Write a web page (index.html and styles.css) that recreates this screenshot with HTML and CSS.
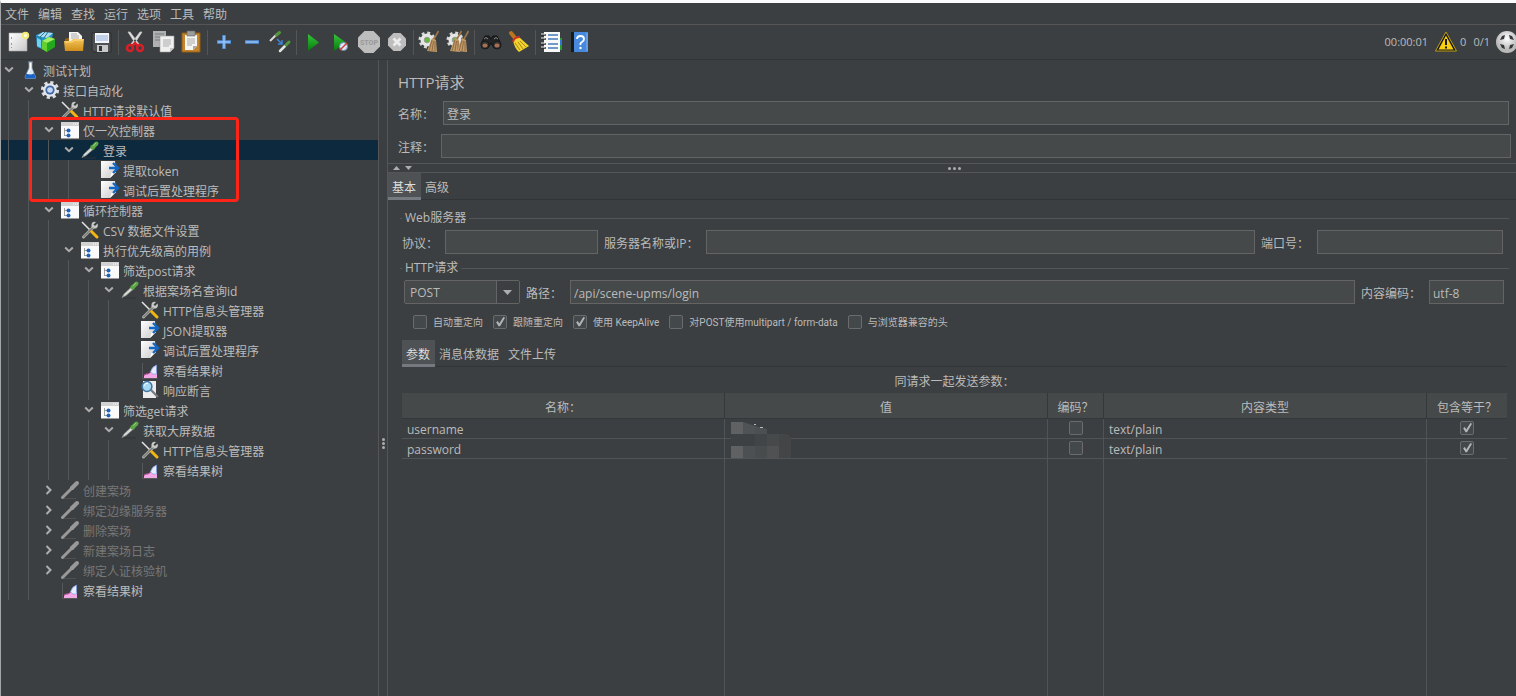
FILE: index.html
```html
<!DOCTYPE html>
<html lang="zh-CN">
<head>
<meta charset="utf-8">
<title>HTTP请求</title>
<link rel="stylesheet" href="styles.css">
</head>
<body>
<svg class="sprite" aria-hidden="true">
  <defs>
    <linearGradient id="g-paper" x1="0" y1="0" x2="1" y2="1"><stop offset="0" stop-color="#fff"/><stop offset="1" stop-color="#c9c9c9"/></linearGradient>
    <linearGradient id="g-green" x1="0" y1="0" x2="0" y2="1"><stop offset="0" stop-color="#36c43a"/><stop offset="1" stop-color="#067a0c"/></linearGradient>
    <linearGradient id="g-gold" x1="0" y1="0" x2="0" y2="1"><stop offset="0" stop-color="#f3c65a"/><stop offset="1" stop-color="#cf8d18"/></linearGradient>
    <radialGradient id="g-ball" cx=".5" cy=".35"><stop offset="0" stop-color="#fff"/><stop offset="1" stop-color="#b9b9b9"/></radialGradient>
  </defs>
  <symbol id="open" viewBox="0 0 10 10"><path d="M1.200 2.500 5 6.200l3.800-3.700" fill="none" stroke="#adadad" stroke-width="2"/></symbol>
  <symbol id="shut" viewBox="0 0 10 10"><path d="M2.500 1l4 4-4 4" fill="none" stroke="#adadad" stroke-width="2"/></symbol>
  <symbol id="flask" viewBox="0 0 20 20"><path d="M8 2h5M9 2v6L5 17q0 1.500 1.500 1.500h8q1.500 0 1-1.500L12 8V2z" fill="#dce8f4" stroke="#8fa3b8" stroke-width=".7"/><path d="M6.500 13.500 5 17q0 1.500 1.500 1.500h8q1.500 0 1-1.500L14 13.500q-4 2-7.500 0z" fill="#1b62c4"/><path d="M10.500 3v6l-3 5" stroke="#fff" fill="none"/></symbol>
  <symbol id="gear" viewBox="0 0 20 20"><circle cx="10" cy="10" r="7.600" fill="none" stroke="#dadde2" stroke-width="3" stroke-dasharray="3.200 2.770"/><circle cx="10" cy="10" r="6.800" fill="#e3e6ea"/><circle cx="10" cy="10" r="4.600" fill="#3c67a8"/><circle cx="10" cy="10" r="2.800" fill="#c4d6f2"/></symbol>
  <symbol id="tools" viewBox="0 0 20 20"><path d="M2 2l9 9" stroke="#e4e4e4" stroke-width="1.500"/><path d="M3.500 17 13.500 7" stroke="#a9aaa4" stroke-width="3" stroke-linecap="round"/><path d="M17.500 3.500 15 6l-1.500-1.500L16 2q-4-1-4.500 2.500T13 8q3 1.500 4.500-1 .8-2 0-3.500z" fill="#c8c9c4"/><path d="M11.500 11.500l5.500 5.500" stroke="#f0b614" stroke-width="3" stroke-linecap="round"/><path d="M3.500 17 13 7.500" stroke="#4c4d4b" stroke-width=".8"/></symbol>
  <symbol id="ctrl" viewBox="0 0 20 20"><path d="M1 2h18v16.500H1z" fill="#fafafa"/><path d="M1 2h18v4H1z" fill="#d2d2d2"/><path d="M13 4h1m1 0h1m1 0h1" stroke="#fff"/><path d="M4.500 8v8M4.500 10.500H7m-2.500 5H7" stroke="#888" stroke-width=".8" fill="none"/><circle cx="8.500" cy="10.500" r="2" fill="#1b62b8"/><circle cx="8.500" cy="15.500" r="2" fill="#1b62b8"/></symbol>
  <symbol id="pipette" viewBox="0 0 20 20"><path d="M3.500 18H16" stroke="#303234"/><path d="M2 17.500 4 14l7.500-7 2 2L6 15.500z" fill="#d9ddd8" stroke="#8b8f8a" stroke-width=".8"/><path d="M10.500 5.500l4 4" stroke="#367726" stroke-width="2"/><path d="M12.500 7.500 16.500 3.500" stroke="#5ea649" stroke-width="4" stroke-linecap="round"/><path d="M13 6l3-3" stroke="#93cc7f"/></symbol>
  <symbol id="pipette-off" viewBox="0 0 20 20"><path d="M3.500 18.500H16" stroke="#4e5052"/><path d="M2.500 17.500 12 8" stroke="#999" stroke-width="3" stroke-linecap="round"/><path d="M10.500 6.500l3 3" stroke="#999" stroke-width="2"/><path d="M12.500 7.500 17 3" stroke="#999" stroke-width="4" stroke-linecap="round"/></symbol>
  <symbol id="post" viewBox="0 0 20 20"><path d="M1 1h14l1 11-6 6H1z" fill="url(#g-paper)"/><path d="M16 12q-4-1-4.500 1L10 18z" fill="#fff"/><path d="M9 8h8M13 3l5 5-5 5" fill="none" stroke="#1267c5" stroke-width="2.400"/></symbol>
  <symbol id="chart" viewBox="0 0 20 20"><path d="M2.500 3v15.500h15" fill="none" stroke="#56585c"/><path d="M4 18v-3q2-2 4-1 3-2 5-3l4 1v6z" fill="#f2a8e4"/><path d="M4 15.500q2-2 4-1.500l3-2" fill="none" stroke="#bb4b98"/><path d="M10.500 12q1-5 6-7v9q-4 1-6-2z" fill="#e7edff" stroke="#7c9de2" stroke-width=".7"/></symbol>
  <symbol id="lens" viewBox="0 0 20 20"><path d="M3 1h13v17H3z" fill="#ececec"/><path d="M11 10l7 7" stroke="#73797e" stroke-width="2.200"/><circle cx="7" cy="6.500" r="4.900" fill="#a7d8f3" stroke="#3f749f" stroke-width="1.500"/><path d="M4 6q1-3 4-3" stroke="#fff" fill="none"/></symbol>
  <symbol id="sheet" viewBox="0 0 24 24"><path d="M3 3h18v18H3z" fill="url(#g-paper)" stroke="#aaa" stroke-width=".6"/><path d="M5.500 7v2m0 4v2m0 2v1" stroke="#999"/><circle cx="19.500" cy="5.500" r="3.700" fill="#f5ec78"/><circle cx="19.500" cy="5.500" r="1.500" fill="#fff"/></symbol>
  <symbol id="books" viewBox="0 0 24 24"><path d="M2 5l7-3 10 1-1 6-8 11-7-3z" fill="#1f95cc"/><path d="M3 6l6-4 10 1-6 5z" fill="#a9dcef"/><path d="M6 7l5-5M10 8l4-6M3 6l4 2v8" stroke="#2d7591" fill="none"/><path d="M3 8l4 2v8l-4-2z" fill="#6fd0f3"/><path d="M8 11l7-4 6 2v8l-8 5-5-3z" fill="#23a91d"/><path d="M8 11l7-4 6 2-8 4z" fill="#a5ed62"/><path d="M8 11l5 2v9l-5-3z" fill="#64cf30"/></symbol>
  <symbol id="folder" viewBox="0 0 24 24"><path d="M3 9l3-1 3-1h4l8 5v9H4z" fill="#98640f"/><path d="M7 2h9l4 4v9H7z" fill="#f5f5f5"/><path d="M9 4h6M9 6h8M9 8h8" stroke="#aaa"/><path d="M2 11h7l2-2h11l-1 12H3z" fill="url(#g-gold)"/><path d="M3 12h7l2-2h9" stroke="#ffdb83" fill="none"/></symbol>
  <symbol id="disk" viewBox="0 0 24 24"><path d="M2 3h19v19H4l-2-2z" fill="#4f5153" stroke="#2b2d2e"/><path d="M5 3h14v10H5z" fill="#f2f5f9"/><path d="M6 6h12M6 8h12M6 10h12" stroke="#91aeda"/><path d="M7 15h11v7H7z" fill="#c8c9cb"/><path d="M9 16h3v5H9z" fill="#333"/></symbol>
  <symbol id="cut" viewBox="0 0 24 24"><path d="M5 2l9 14 2-2L7 2zM19 2l-9 14-2-2 9-12z" fill="#e4e6e5" stroke="#bfc1c0" stroke-width=".8"/><g fill="none" stroke="#d81f27" stroke-width="2.500"><ellipse cx="7" cy="18" rx="3" ry="3"/><ellipse cx="17" cy="18" rx="3" ry="3"/><path d="M9 16l3-3 3 3"/></g></symbol>
  <symbol id="copy" viewBox="0 0 24 24"><path d="M2 1h13v16H2z" fill="#aeb1b0"/><path d="M4 4h9M4 7h9M4 10h9" stroke="#777b79"/><path d="M9 6h14v12l-4 4H9z" fill="#f0f1ef" stroke="#999" stroke-width=".6"/><path d="M12 10h8M12 12h8M12 14h8M12 16h6" stroke="#aaa"/><path d="M19 22v-4h4z" fill="#c7c8c6"/></symbol>
  <symbol id="paste" viewBox="0 0 24 24"><path d="M3 3h18v19H3z" fill="#c3852b" stroke="#925c14"/><path d="M6 5h12v11l-4 4H6z" fill="#f5f5f3"/><path d="M8 1h8v5H8z" fill="#999d9c" stroke="#666" stroke-width=".6"/><path d="M8 9h8M8 11h8M8 13h8M8 15h5" stroke="#aaa"/><path d="M14 20v-4h4z" fill="#aaa"/></symbol>
  <symbol id="plus" viewBox="0 0 24 24"><path d="M12 5v14M5 12h14" stroke="#5293de" stroke-width="3.500"/><path d="M12 6v12M6 12h12" stroke="#b5d6fa"/></symbol>
  <symbol id="minus" viewBox="0 0 24 24"><path d="M5 12h14" stroke="#5293de" stroke-width="3.500"/><path d="M6 12h12" stroke="#b5d6fa"/></symbol>
  <symbol id="toggle" viewBox="0 0 24 24"><path d="M2 11l7-7" stroke="#d7dcd5" stroke-width="2"/><path d="M8.500 5l3-2.500" stroke="#54983e" stroke-width="3" stroke-linecap="round"/><path d="M12 21l5-5" stroke="#e2e6e0" stroke-width="2.500" stroke-linecap="round"/><path d="M18 15l3-3" stroke="#54983e" stroke-width="3" stroke-linecap="round"/><path d="M9 9l5 5m0-4v4h-4" fill="none" stroke="#3f82d5" stroke-width="1.500"/></symbol>
  <symbol id="run" viewBox="0 0 24 24"><path d="M7 4l11 8.500L7 21z" fill="url(#g-green)"/></symbol>
  <symbol id="run-now" viewBox="0 0 24 24"><path d="M5 4l12 8.500L5 21z" fill="url(#g-green)"/><circle cx="14.500" cy="16.500" r="4" fill="#dbe7f5" stroke="#6e8cad"/><path d="M11 20l7-7" stroke="#d43c37" stroke-width="1.500"/></symbol>
  <symbol id="shutdown" viewBox="0 0 24 24"><path d="M8.500 3h7L21 8.500v7L15.500 21h-7L3 15.500v-7z" fill="#bdbdbd"/><path d="M8.500 8.500l7 7m0-7l-7 7" stroke="#ececec" stroke-width="2.800"/></symbol>
  <symbol id="broom" viewBox="0 0 24 24"><path d="M20.500 1 16 9" stroke="#9d7546" stroke-width="1.600"/><path d="M14 8l4 2 1 12-10-1z" fill="#c39b69"/><path d="M14 10l-3 11M15.500 11l-1.500 10M17 11l0 10" stroke="#805f39" stroke-width=".8"/></symbol>
  <symbol id="gear-green" viewBox="0 0 24 24"><circle cx="9" cy="10" r="7" fill="none" stroke="#d8d8d8" stroke-width="3" stroke-dasharray="2.800 2.700"/><circle cx="9" cy="10" r="6.500" fill="#e6e6e6"/><circle cx="9" cy="10" r="2.800" fill="#65b833" stroke="#999"/></symbol>
  <symbol id="clear" viewBox="0 0 24 24"><use href="#gear-green"/><use href="#broom"/></symbol>
  <symbol id="clear-all" viewBox="0 0 24 24"><use href="#gear-green"/><use href="#broom" x="-5"/><use href="#broom" x="2"/></symbol>
  <symbol id="binoculars" viewBox="0 0 24 24"><path d="M2 14 6 6h4l2 3 2-3h4l4 8-3 4h-4l-3-5-3 5H5z" fill="#222426" stroke="#111"/><path d="M5 9q2-3 4 0M15 9q2-3 4 0" stroke="#888" fill="none"/><circle cx="6" cy="15" r="4" fill="#333" stroke="#17191a"/><circle cx="18" cy="15" r="4" fill="#333" stroke="#17191a"/><ellipse cx="6" cy="15.500" rx="2.500" ry="2" fill="#a87052"/><ellipse cx="18" cy="15.500" rx="2.500" ry="2" fill="#a87052"/></symbol>
  <symbol id="brush" viewBox="0 0 24 24"><path d="M4 3l4 5" stroke="#bb741f" stroke-width="4" stroke-linecap="round"/><path d="M6 11q2-4 6-4l10 9-10 6q-4-3-6-11z" fill="#eed22f"/><path d="M11 12l5 7M13 11l6 6M8 13l5 7" stroke="#ad8712"/><path d="M6 12q1-5 7-5" fill="none" stroke="#d22e21" stroke-width="2"/></symbol>
  <symbol id="log" viewBox="0 0 24 24"><path d="M20 8h2v12h-2z" fill="#209e31"/><path d="M20 10h2v5h-2z" fill="#3076d2"/><path d="M4 2h16v20H4z" fill="#f8f8f8"/><path d="M8 5h10M8 9h10M8 14h10M8 18h10" stroke="#4577b9" stroke-width="1.400"/><path d="M1 5h5M1 9h5M1 14h5M1 18h5" stroke="#2a2c2d" stroke-width="1.500"/><path d="M1 4h4M1 8h4M1 13h4M1 17h4" stroke="#eee"/></symbol>
  <symbol id="help" viewBox="0 0 24 24"><path d="M3 2h17v20H3z" fill="#4689dd"/><path d="M3 2h3v20H3z" fill="#17191b"/><path d="M19 3v18" stroke="#80b5f5"/><path d="M9 9q0-3 3.500-3T16 9q0 2-2 3t-1.500 3" fill="none" stroke="#fff" stroke-width="1.800"/><circle cx="12.500" cy="18" r="1.200" fill="#fff"/></symbol>
  <symbol id="warn" viewBox="0 0 24 24"><path d="M12 2 22.500 21h-21z" fill="#161616" stroke="#bda017" stroke-linejoin="round"/><path d="M12 5.500 19.500 19.500h-15z" fill="#f7cf10"/><path d="M12 9v6M12 16.500v2" stroke="#1a1a1a" stroke-width="2"/></symbol>
  <symbol id="remote" viewBox="0 0 24 24"><circle cx="12" cy="12" r="11" fill="url(#g-ball)"/><path d="M10 5 7 6 5 10l4-1zM14 5l3 1 2 4-4-1zM10 19l-3-1-2-4 4 1zM14 19l3-1 2-4-4 1z" fill="#363839"/></symbol>
</svg>

<div class="app">
  <nav class="menubar">
    <button class="menu">文件</button><button class="menu">编辑</button><button class="menu">查找</button><button class="menu">运行</button><button class="menu">选项</button><button class="menu">工具</button><button class="menu">帮助</button>
  </nav>

  <header class="toolbar">
    <button class="tool" aria-label="新建"><svg><use href="#sheet"/></svg></button>
    <button class="tool" aria-label="模板"><svg><use href="#books"/></svg></button>
    <button class="tool" aria-label="打开"><svg><use href="#folder"/></svg></button>
    <button class="tool" aria-label="保存"><svg><use href="#disk"/></svg></button>
    <span class="sep"></span>
    <button class="tool" aria-label="剪切"><svg><use href="#cut"/></svg></button>
    <button class="tool" aria-label="复制"><svg><use href="#copy"/></svg></button>
    <button class="tool" aria-label="粘贴"><svg><use href="#paste"/></svg></button>
    <span class="sep"></span>
    <button class="tool" aria-label="展开"><svg><use href="#plus"/></svg></button>
    <button class="tool" aria-label="折叠"><svg><use href="#minus"/></svg></button>
    <button class="tool" aria-label="切换"><svg><use href="#toggle"/></svg></button>
    <span class="sep"></span>
    <button class="tool" aria-label="启动"><svg><use href="#run"/></svg></button>
    <button class="tool" aria-label="不停顿启动"><svg><use href="#run-now"/></svg></button>
    <button class="tool" aria-label="停止"><svg viewBox="0 0 24 24"><path d="M7.500 1h9L23 7.500v9L16.500 23h-9L1 16.500v-9z" fill="#bdbdbd"/><text class="stop-text" x="12" y="15" text-anchor="middle" fill="#989898">STOP</text></svg></button>
    <button class="tool" aria-label="关闭"><svg><use href="#shutdown"/></svg></button>
    <span class="sep"></span>
    <button class="tool" aria-label="清除"><svg><use href="#clear"/></svg></button>
    <button class="tool" aria-label="清除全部"><svg><use href="#clear-all"/></svg></button>
    <span class="sep"></span>
    <button class="tool" aria-label="搜索"><svg><use href="#binoculars"/></svg></button>
    <button class="tool" aria-label="重置搜索"><svg><use href="#brush"/></svg></button>
    <span class="sep"></span>
    <button class="tool" aria-label="函数助手"><svg><use href="#log"/></svg></button>
    <button class="tool" aria-label="帮助"><svg><use href="#help"/></svg></button>
    <div class="status">
      <span class="timer">00:00:01</span>
      <svg class="status-icon"><use href="#warn"/></svg>
      <span class="errors">0</span>
      <span class="threads">0/1</span>
      <svg class="status-icon"><use href="#remote"/></svg>
    </div>
  </header>

  <div class="workspace">
    <aside class="tree-pane">
      <ul class="tree">
        <li class="node d0"><svg class="arrow"><use href="#open"/></svg><svg class="icon"><use href="#flask"/></svg>测试计划</li>
        <li class="node d1"><svg class="arrow"><use href="#open"/></svg><svg class="icon"><use href="#gear"/></svg>接口自动化</li>
        <li class="node d2"><span class="arrow"></span><svg class="icon"><use href="#tools"/></svg>HTTP请求默认值</li>
        <li class="node d2"><svg class="arrow"><use href="#open"/></svg><svg class="icon"><use href="#ctrl"/></svg>仅一次控制器</li>
        <li class="node d3 selected"><svg class="arrow"><use href="#open"/></svg><svg class="icon"><use href="#pipette"/></svg>登录</li>
        <li class="node d4"><span class="arrow"></span><svg class="icon"><use href="#post"/></svg>提取token</li>
        <li class="node d4"><span class="arrow"></span><svg class="icon"><use href="#post"/></svg>调试后置处理程序</li>
        <li class="node d2"><svg class="arrow"><use href="#open"/></svg><svg class="icon"><use href="#ctrl"/></svg>循环控制器</li>
        <li class="node d3"><span class="arrow"></span><svg class="icon"><use href="#tools"/></svg>CSV 数据文件设置</li>
        <li class="node d3"><svg class="arrow"><use href="#open"/></svg><svg class="icon"><use href="#ctrl"/></svg>执行优先级高的用例</li>
        <li class="node d4"><svg class="arrow"><use href="#open"/></svg><svg class="icon"><use href="#ctrl"/></svg>筛选post请求</li>
        <li class="node d5"><svg class="arrow"><use href="#open"/></svg><svg class="icon"><use href="#pipette"/></svg>根据案场名查询id</li>
        <li class="node d6"><span class="arrow"></span><svg class="icon"><use href="#tools"/></svg>HTTP信息头管理器</li>
        <li class="node d6"><span class="arrow"></span><svg class="icon"><use href="#post"/></svg>JSON提取器</li>
        <li class="node d6"><span class="arrow"></span><svg class="icon"><use href="#post"/></svg>调试后置处理程序</li>
        <li class="node d6"><span class="arrow"></span><svg class="icon"><use href="#chart"/></svg>察看结果树</li>
        <li class="node d6"><span class="arrow"></span><svg class="icon"><use href="#lens"/></svg>响应断言</li>
        <li class="node d4"><svg class="arrow"><use href="#open"/></svg><svg class="icon"><use href="#ctrl"/></svg>筛选get请求</li>
        <li class="node d5"><svg class="arrow"><use href="#open"/></svg><svg class="icon"><use href="#pipette"/></svg>获取大屏数据</li>
        <li class="node d6"><span class="arrow"></span><svg class="icon"><use href="#tools"/></svg>HTTP信息头管理器</li>
        <li class="node d6"><span class="arrow"></span><svg class="icon"><use href="#chart"/></svg>察看结果树</li>
        <li class="node d2 disabled"><svg class="arrow"><use href="#shut"/></svg><svg class="icon"><use href="#pipette-off"/></svg>创建案场</li>
        <li class="node d2 disabled"><svg class="arrow"><use href="#shut"/></svg><svg class="icon"><use href="#pipette-off"/></svg>绑定边缘服务器</li>
        <li class="node d2 disabled"><svg class="arrow"><use href="#shut"/></svg><svg class="icon"><use href="#pipette-off"/></svg>删除案场</li>
        <li class="node d2 disabled"><svg class="arrow"><use href="#shut"/></svg><svg class="icon"><use href="#pipette-off"/></svg>新建案场日志</li>
        <li class="node d2 disabled"><svg class="arrow"><use href="#shut"/></svg><svg class="icon"><use href="#pipette-off"/></svg>绑定人证核验机</li>
        <li class="node d2"><span class="arrow"></span><svg class="icon"><use href="#chart"/></svg>察看结果树</li>
      </ul>
      <div class="callout"></div>
    </aside>

    <div class="divider"><span class="dot"></span><span class="dot"></span><span class="dot"></span></div>

    <main class="editor">
      <section class="summary">
        <h1 class="title">HTTP请求</h1>
        <div class="field name-row"><label for="name">名称：</label><input class="box" id="name" type="text" value="登录"></div>
        <div class="field note-row"><label for="note">注释：</label><input class="box" id="note" type="text"></div>
      </section>
      <div class="splitter">
        <svg class="split-arrows" viewBox="0 0 20 6"><path d="M0 5 3.500 1 7 5zM12 1h7l-3.500 4z" fill="#adadad"/></svg>
        <span class="dot"></span><span class="dot"></span><span class="dot"></span>
      </div>
      <div class="tabs"><button class="tab active">基本</button><button class="tab">高级</button></div>

      <div class="panel">
        <fieldset class="group">
          <legend>Web服务器</legend>
          <div class="row server">
            <label for="proto">协议：</label><input class="box" id="proto" type="text">
            <label for="host">服务器名称或IP：</label><input class="box" id="host" type="text">
            <label for="port">端口号：</label><input class="box" id="port" type="text">
          </div>
        </fieldset>
        <fieldset class="group">
          <legend>HTTP请求</legend>
          <div class="row request">
            <span class="combo"><select class="box" aria-label="方法"><option>POST</option></select><svg class="combo-arrow" viewBox="0 0 23 22"><path d="M0 0v22" stroke="#646464" stroke-width="2"/><path d="M7 9h9l-4.500 5z" fill="#adadad"/></svg></span>
            <label for="path">路径：</label><input class="box" id="path" type="text" value="/api/scene-upms/login">
            <label for="enc">内容编码：</label><input class="box" id="enc" type="text" value="utf-8">
          </div>
          <div class="options">
            <label class="option"><input class="check" type="checkbox">自动重定向</label>
            <label class="option"><input class="check" type="checkbox" checked>跟随重定向</label>
            <label class="option"><input class="check" type="checkbox" checked>使用 KeepAlive</label>
            <label class="option"><input class="check" type="checkbox">对POST使用multipart / form-data</label>
            <label class="option"><input class="check" type="checkbox">与浏览器兼容的头</label>
          </div>
        </fieldset>

        <section class="body-data">
          <div class="tabs"><button class="tab active">参数</button><button class="tab">消息体数据</button><button class="tab">文件上传</button></div>
          <p class="caption">同请求一起发送参数：</p>
          <div class="table-area">
            <table class="params">
              <colgroup><col><col><col class="c-enc"><col><col class="c-eq"></colgroup>
              <thead><tr><th>名称：</th><th>值</th><th>编码？</th><th>内容类型</th><th>包含等于？</th></tr></thead>
              <tbody>
                <tr><td>username</td><td class="masked"><svg class="mosaic" viewBox="0 0 62 38"><path d="M2 2h12v12H2z" fill="#5f6163"/><path d="M14 2l12 4v8H14z" fill="#505356"/><path d="M26 6l12 3v5H26z" fill="#4d5052"/><path d="M2 14h24v12H2z" fill="#3e4143"/><path d="M26 14h12v12H26z" fill="#424547"/><path d="M38 14h12v12H38z" fill="#474a4a"/><path d="M50 14h7q5 1 5 5v7H50z" fill="#434546"/><path d="M2 26h12v12H2z" fill="#5f6163"/><path d="M14 26h12v12H14z" fill="#4d5052"/><path d="M26 26h12v12H26z" fill="#484c4d"/><path d="M38 26h12v12H38z" fill="#4f5152"/><path d="M50 26h12v12H50z" fill="#434546"/><path d="M25 4.500h2M31 7.500h3" stroke="#bbb"/></svg></td><td class="mid"><input class="check" type="checkbox" aria-label="编码 username"></td><td>text/plain</td><td class="mid"><input class="check" type="checkbox" checked aria-label="包含等于 username"></td></tr>
                <tr><td>password</td><td></td><td class="mid"><input class="check" type="checkbox" aria-label="编码 password"></td><td>text/plain</td><td class="mid"><input class="check" type="checkbox" checked aria-label="包含等于 password"></td></tr>
                <tr class="rest"><td></td><td></td><td></td><td></td><td></td></tr>
              </tbody>
            </table>
          </div>
        </section>
      </div>
    </main>
  </div>
</div>
</body>
</html>
```

FILE: styles.css
```css
* { box-sizing: border-box; }

body {
  margin: 0;
  background: #3c3f41;
  color: #bbbbbb;
  font: 12px/16px "Open Sans", "Noto Sans CJK SC", sans-serif;
  overflow: hidden;
}

button, input, select { font: inherit; color: inherit; margin: 0; }
.sprite { position: absolute; width: 0; height: 0; }
.stop-text { font: bold 7px "Roboto", sans-serif; }

.app {
  display: flex;
  flex-direction: column;
  height: 100vh;
  border-top: 3px solid #fafcfc;
  border-left: 1px solid #a3a5a6;
}

/* menu and toolbar */
.menubar {
  display: flex;
  gap: 9px;
  height: 22px;
  flex: none;
  padding: 2px 0 0 4px;
  border-bottom: 1px solid #555555;
}
.menu { padding: 0; border: 0; background: none; }

.toolbar {
  display: flex;
  align-items: center;
  flex: none;
  height: 35px;
  padding-left: 3px;
  border-bottom: 1px solid #323537;
}
.tool { width: 28px; height: 28px; padding: 2px; border: 0; background: none; }
.tool svg { display: block; width: 24px; height: 24px; }
.sep { width: 1px; height: 25px; margin: 0 2px; background: #555555; }
.status { display: flex; align-items: center; margin-left: auto; margin-right: -3px; font-size: 11px; }
.status-icon { width: 24px; height: 24px; flex: none; }
.timer { margin-right: 6px; }
.errors { margin: 0 7px 0 2px; }
.threads { margin-right: 5px; }

.workspace { display: flex; flex: 1; min-height: 0; }

/* test plan tree */
.tree-pane { position: relative; flex: none; width: 378px; border-right: 1px solid #555555; }
.tree { margin: 0; padding: 0; list-style: none; }
.node {
  --indent: calc(var(--depth) * 20px);
  display: flex;
  align-items: flex-start;
  height: 20px;
  padding-left: calc(var(--indent) + 3px);
  line-height: 23px;
  white-space: nowrap;
  background: repeating-linear-gradient(to right, transparent 0 7px, #53575a 7px 8px, transparent 8px 20px) no-repeat 0 0 / var(--indent) 100%;
}
.d0 { --depth: 0; }
.d1 { --depth: 1; }
.d2 { --depth: 2; }
.d3 { --depth: 3; }
.d4 { --depth: 4; }
.d5 { --depth: 5; }
.d6 { --depth: 6; }
.arrow { width: 10px; height: 10px; margin: 5px 6px 0 0; flex: none; }
.icon { width: 20px; height: 20px; margin-right: 3px; flex: none; }
.selected { background-color: #0d293e; }
.disabled { color: #777777; }
.callout {
  position: absolute;
  left: 28px;
  top: 57px;
  width: 210px;
  height: 85px;
  border: 3px solid #ff2418;
  border-radius: 4px;
}

.dot { width: 3px; height: 3px; border-radius: 50%; background: #adadad; }
.divider {
  display: flex;
  flex-direction: column;
  align-items: center;
  justify-content: center;
  gap: 1px;
  flex: none;
  width: 8px;
}
.divider .dot:first-child { margin-top: 130px; }

/* sampler editor */
.editor {
  display: flex;
  flex-direction: column;
  flex: 1;
  min-width: 0;
  border-left: 1px solid #555555;
}
.summary { padding: 10px 5px 5px 10px; }
.title { margin: 0 0 7px; font-size: 15px; line-height: 24px; font-weight: 400; }
.field { display: flex; align-items: center; }
.field .box { flex: 1; }
.field label, .row label { padding-top: 3px; }
.name-row { margin: 0 2px 9px 0; }
.name-row label { width: 45px; }
.note-row label { width: 43px; }

.box {
  min-width: 0;
  height: 24px;
  padding: 2px 3px 0;
  border: 1px solid #646464;
  border-radius: 0;
  background: #45494a;
  outline: 0;
}

.splitter {
  display: flex;
  align-items: center;
  justify-content: center;
  gap: 2px;
  position: relative;
  flex: none;
  height: 10px;
  padding-left: 5px;
  border: solid #555555;
  border-width: 1px 0;
}
.split-arrows { position: absolute; left: 5px; top: 1px; width: 20px; height: 6px; }

.tabs { display: flex; flex: none; height: 27px; border-bottom: 1px solid #323537; }
.tab { height: 27px; padding: 5px 5px 0 4px; border: 0; border-bottom: 3px solid transparent; background: none; }
.tab.active { color: #dddddd; background: #4e5254; border-bottom-color: #747a80; }

.panel { display: flex; flex-direction: column; flex: 1; min-height: 0; padding: 10px 7px 0 12px; }
.group { min-width: 0; margin: 0 0 6px; padding: 4px 0 0; border: 0 solid #555555; border-top-width: 1px; }
.group legend { margin-left: 2px; padding: 0 3px; }
.row { display: flex; align-items: center; height: 24px; }
.row label { flex: none; white-space: nowrap; }
.row .box + label { margin-left: 6px; }
.server { padding: 0 6px 0 2px; }
.server label:nth-of-type(1) { width: 43px; }
.server label:nth-of-type(2) { width: 102px; }
.server label:nth-of-type(3) { width: 56px; }
#proto { flex: 153 1 153px; }
#host { flex: 549 1 549px; }
#port { flex: 186 1 186px; }
.request { padding: 0 5px 0 4px; }
.combo { position: relative; width: 116px; margin-right: 6px; }
.combo select { display: block; width: 100%; padding: 2px 5px 0; border-radius: 2px; appearance: none; }
.combo-arrow { position: absolute; right: 1px; top: 1px; width: 23px; height: 22px; background: #3c3f41; pointer-events: none; }
.request label[for="path"] { width: 44px; }
.request label[for="enc"] { width: 68px; }
#path { flex: 1; }
#enc { width: 75px; }

.options {
  display: flex;
  gap: 10px;
  height: 14px;
  margin: 11px 0 11px 13px;
  font: 10px/15px "Roboto", "Noto Sans CJK SC", sans-serif;
}
.option { display: flex; gap: 6px; white-space: nowrap; }
.check {
  appearance: none;
  flex: none;
  display: block;
  width: 14px;
  height: 14px;
  border: 1px solid #6b6b6b;
  border-radius: 2px;
  background: #43494a;
}
.check:checked::before {
  content: "";
  display: block;
  width: 12px;
  height: 12px;
  background: #b4b4b4;
  clip-path: polygon(18% 52%, 32% 42%, 44% 62%, 78% 8%, 92% 14%, 50% 86%, 38% 86%);
}

/* parameter table */
.body-data { display: flex; flex-direction: column; flex: 1; min-height: 0; margin: -6px 2px 0; }
.caption { margin: 0; padding-top: 3px; flex: none; line-height: 23px; text-align: center; }
.table-area { flex: 1; min-height: 0; }
.params { width: 100%; height: 100%; table-layout: fixed; border-collapse: separate; border-spacing: 0; }
.c-enc { width: 56px; }
.c-eq { width: 80px; }
.params th {
  height: 26px;
  padding: 4px 0 0;
  font-weight: 400;
  background: #45494a;
  border: solid #34383a;
  border-width: 0 1px 1px 0;
}
.params td { height: 20px; padding: 2px 5px 0; border: solid #505456; border-width: 0 1px 1px 0; }
.params tr > :last-child { border-right: 0; }
.params .rest td { height: auto; border-bottom: 0; }
.params .mid { padding: 0 0 1px; }
.mid .check { margin: 0 auto; }
.params .masked { position: relative; }
.mosaic { position: absolute; left: 4px; top: 1px; width: 62px; height: 38px; }
```
